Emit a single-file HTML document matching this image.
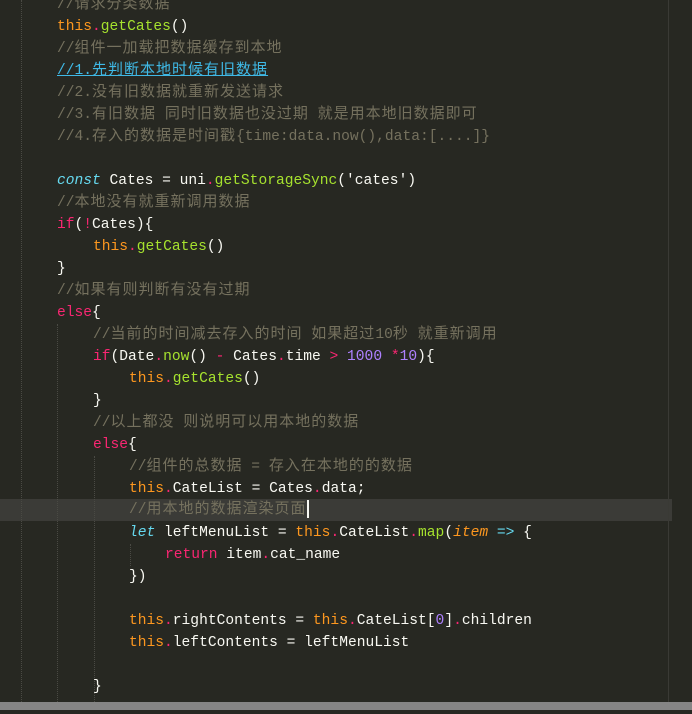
<!DOCTYPE html><html><head><style>
body{margin:0;width:692px;height:714px;background:#272822;overflow:hidden;position:relative;font-family:"Liberation Mono","Noto Sans CJK SC",monospace;font-size:14.6px;color:#f8f8f2}
.l{position:absolute;left:0;height:22px;line-height:22px;white-space:pre}
.z{font-style:normal;font-family:"Noto Sans CJK SC",sans-serif;font-size:15px;letter-spacing:1px;line-height:0}
.c{color:#75715e}.t{color:#fd971f}.p{color:#f92672}.g{color:#a6e22e}.k{color:#66d9ef;font-style:italic}.n{color:#ae81ff}
.u{color:#3fb9e6;text-decoration:underline}
.gd{position:absolute;top:0;width:0;border-left:1px dotted #4a4a44}
</style></head><body>
<div style="position:absolute;left:0;top:499px;width:672px;height:22px;background:#3b3b37"></div>
<div class="gd" style="left:21px;height:702px"></div>
<div class="gd" style="left:57px;top:324px;height:378px"></div>
<div class="gd" style="left:94px;top:456px;height:246px"></div>
<div class="gd" style="left:130px;top:544px;height:22px"></div>
<div style="position:absolute;left:668px;top:0;width:1px;height:702px;background:#3a3a35"></div>
<div style="position:absolute;left:0;top:702px;width:692px;height:8px;background:#858585"></div>
<div class="l" style="top:-6px;left:57px"><span class="c">//<i class="z">请求分类数据</i></span></div>
<div class="l" style="top:16px;left:57px"><span class="t">this</span><span class="p">.</span><span class="g">getCates</span>()</div>
<div class="l" style="top:38px;left:57px"><span class="c">//<i class="z">组件一加载把数据缓存到本地</i></span></div>
<div class="l" style="top:60px;left:57px"><span class="u">//1.<i class="z">先判断本地时候有旧数据</i></span></div>
<div class="l" style="top:82px;left:57px"><span class="c">//2.<i class="z">没有旧数据就重新发送请求</i></span></div>
<div class="l" style="top:104px;left:57px"><span class="c">//3.<i class="z">有旧数据</i> <i class="z">同时旧数据也没过期</i> <i class="z">就是用本地旧数据即可</i></span></div>
<div class="l" style="top:126px;left:57px"><span class="c">//4.<i class="z">存入的数据是时间戳</i>{time:data.now(),data:[....]}</span></div>
<div class="l" style="top:170px;left:57px"><span class="k">const</span> Cates = uni<span class="p">.</span><span class="g">getStorageSync</span>('cates')</div>
<div class="l" style="top:192px;left:57px"><span class="c">//<i class="z">本地没有就重新调用数据</i></span></div>
<div class="l" style="top:214px;left:57px"><span class="p">if</span>(<span class="p">!</span>Cates){</div>
<div class="l" style="top:236px;left:93px"><span class="t">this</span><span class="p">.</span><span class="g">getCates</span>()</div>
<div class="l" style="top:258px;left:57px">}</div>
<div class="l" style="top:280px;left:57px"><span class="c">//<i class="z">如果有则判断有没有过期</i></span></div>
<div class="l" style="top:302px;left:57px"><span class="p">else</span>{</div>
<div class="l" style="top:324px;left:93px"><span class="c">//<i class="z">当前的时间减去存入的时间</i> <i class="z">如果超过</i>10<i class="z">秒</i> <i class="z">就重新调用</i></span></div>
<div class="l" style="top:346px;left:93px"><span class="p">if</span>(Date<span class="p">.</span><span class="g">now</span>() <span class="p">-</span> Cates<span class="p">.</span>time <span class="p">&gt;</span> <span class="n">1000</span> <span class="p">*</span><span class="n">10</span>){</div>
<div class="l" style="top:368px;left:129px"><span class="t">this</span><span class="p">.</span><span class="g">getCates</span>()</div>
<div class="l" style="top:390px;left:93px">}</div>
<div class="l" style="top:412px;left:93px"><span class="c">//<i class="z">以上都没</i> <i class="z">则说明可以用本地的数据</i></span></div>
<div class="l" style="top:434px;left:93px"><span class="p">else</span>{</div>
<div class="l" style="top:456px;left:129px"><span class="c">//<i class="z">组件的总数据</i> = <i class="z">存入在本地的的数据</i></span></div>
<div class="l" style="top:478px;left:129px"><span class="t">this</span><span class="p">.</span>CateList = Cates<span class="p">.</span>data;</div>
<div class="l" style="top:499px;left:129px"><span class="c">//<i class="z">用本地的数据渲染页面</i></span><span style="display:inline-block;width:2px;height:18px;background:#f8f8f2;vertical-align:middle"></span></div>
<div class="l" style="top:522px;left:129px"><span class="k">let</span> leftMenuList = <span class="t">this</span><span class="p">.</span>CateList<span class="p">.</span><span class="g">map</span>(<span class="t" style="font-style:italic">item</span> <span class="k" style="font-style:normal">=&gt;</span> {</div>
<div class="l" style="top:544px;left:165px"><span class="p">return</span> item<span class="p">.</span>cat_name</div>
<div class="l" style="top:566px;left:129px">})</div>
<div class="l" style="top:610px;left:129px"><span class="t">this</span><span class="p">.</span>rightContents = <span class="t">this</span><span class="p">.</span>CateList[<span class="n">0</span>]<span class="p">.</span>children</div>
<div class="l" style="top:632px;left:129px"><span class="t">this</span><span class="p">.</span>leftContents = leftMenuList</div>
<div class="l" style="top:676px;left:93px">}</div>
</body></html>
